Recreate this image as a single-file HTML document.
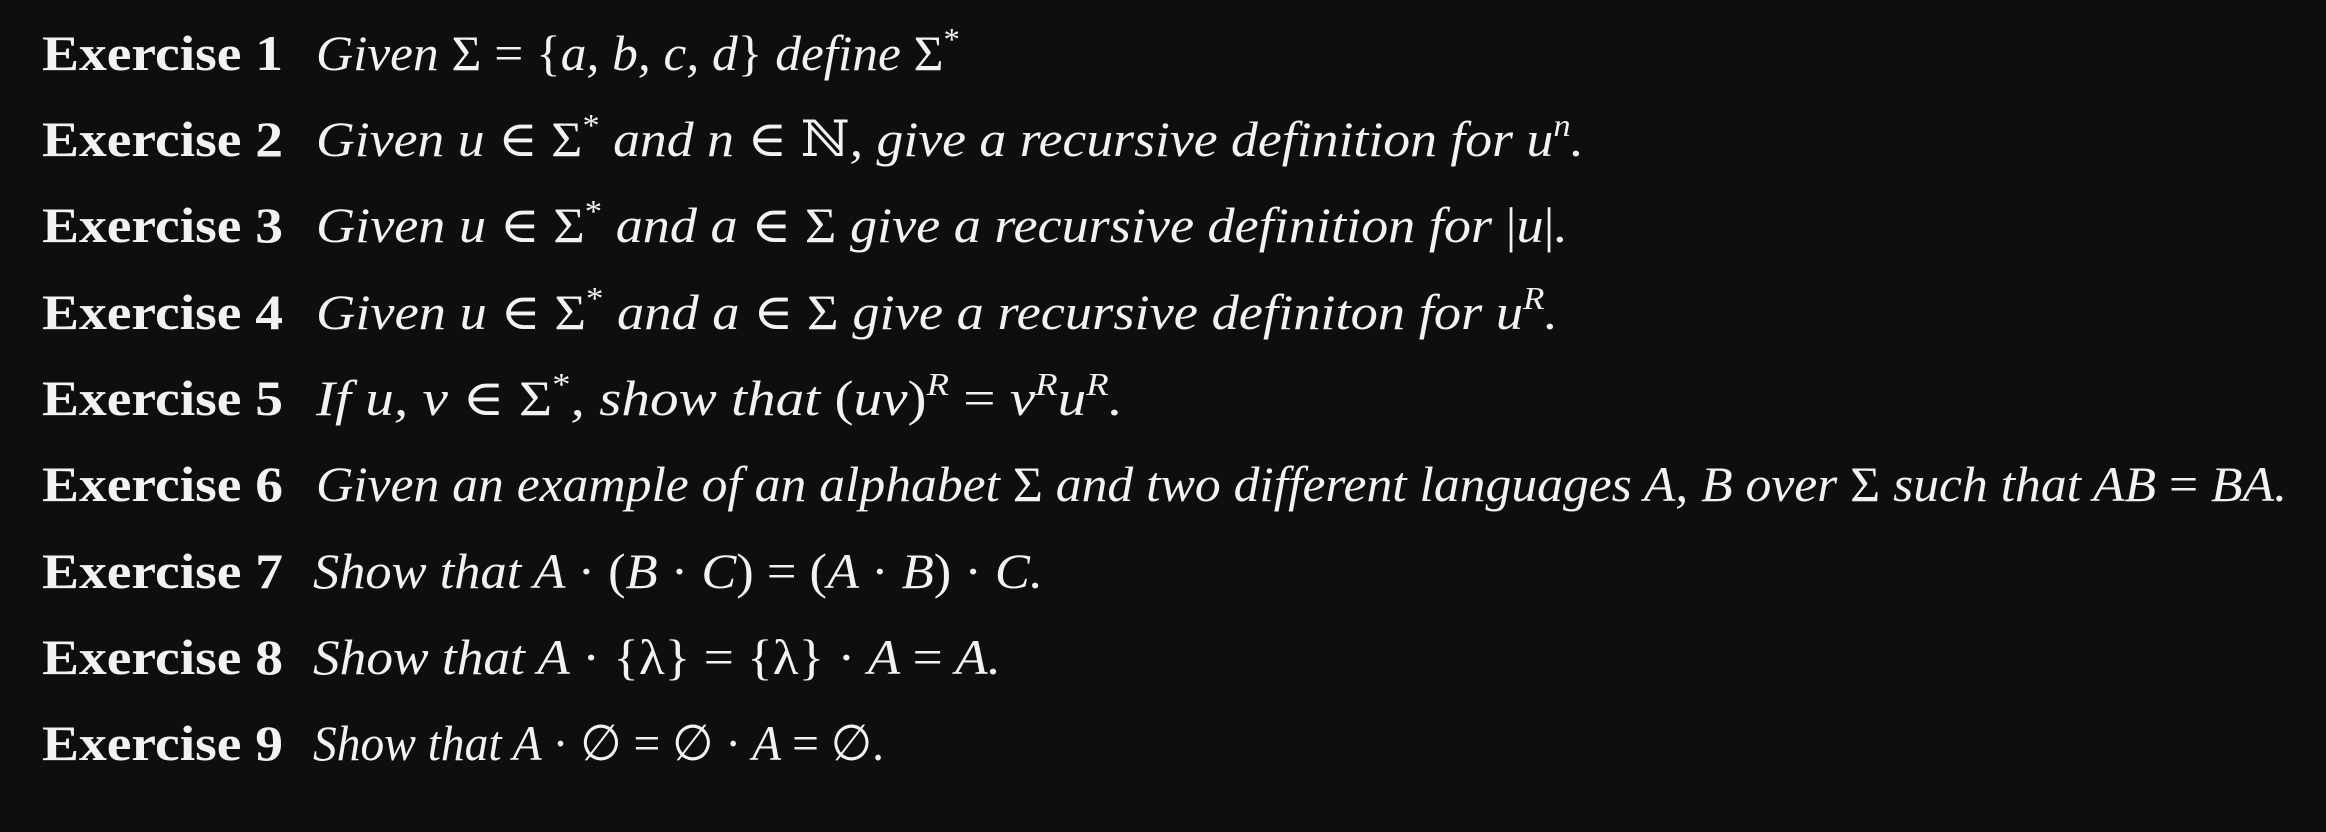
<!DOCTYPE html>
<html><head><meta charset="utf-8"><style>
html,body{margin:0;padding:0;background:#0e0e0e;width:2326px;height:832px;overflow:hidden}
svg{display:block}
text{fill:#f2f2f2;font-family:"Liberation Serif","DejaVu Serif",serif;font-size:50px}
.b{font-weight:bold}
.i{font-style:italic}
</style></head><body>
<svg width="2326" height="832" xmlns="http://www.w3.org/2000/svg">
<g class="b">
<text class="b" x="42" y="70" textLength="241" lengthAdjust="spacingAndGlyphs">Exercise 1</text>
<text class="b" x="42" y="156" textLength="241" lengthAdjust="spacingAndGlyphs">Exercise 2</text>
<text class="b" x="42" y="242" textLength="241" lengthAdjust="spacingAndGlyphs">Exercise 3</text>
<text class="b" x="42" y="329" textLength="241" lengthAdjust="spacingAndGlyphs">Exercise 4</text>
<text class="b" x="42" y="415" textLength="241" lengthAdjust="spacingAndGlyphs">Exercise 5</text>
<text class="b" x="42" y="501" textLength="241" lengthAdjust="spacingAndGlyphs">Exercise 6</text>
<text class="b" x="42" y="588" textLength="241" lengthAdjust="spacingAndGlyphs">Exercise 7</text>
<text class="b" x="42" y="674" textLength="241" lengthAdjust="spacingAndGlyphs">Exercise 8</text>
<text class="b" x="42" y="760" textLength="241" lengthAdjust="spacingAndGlyphs">Exercise 9</text>
</g>
<text class="i" x="316" y="70" textLength="644" lengthAdjust="spacingAndGlyphs">Given <tspan font-style="normal">Σ = {</tspan>a, b, c, d<tspan font-style="normal">}</tspan> define <tspan font-style="normal">Σ</tspan><tspan font-style="normal" font-size="32" dy="-20">*</tspan></text>
<text class="i" x="316" y="156" textLength="1268" lengthAdjust="spacingAndGlyphs">Given u <tspan font-style="normal">∈ Σ</tspan><tspan font-style="normal" font-size="32" dy="-20">*</tspan><tspan dy="20"> and n </tspan><tspan font-style="normal">∈ ℕ</tspan>, give a recursive definition for u<tspan font-size="32" dy="-20">n</tspan><tspan dy="20">.</tspan></text>
<text class="i" x="316" y="242" textLength="1252" lengthAdjust="spacingAndGlyphs">Given u <tspan font-style="normal">∈ Σ</tspan><tspan font-style="normal" font-size="32" dy="-20">*</tspan><tspan dy="20"> and a </tspan><tspan font-style="normal">∈ Σ</tspan> give a recursive definition for <tspan font-style="normal">|</tspan>u<tspan font-style="normal">|</tspan>.</text>
<text class="i" x="316" y="329" textLength="1242" lengthAdjust="spacingAndGlyphs">Given u <tspan font-style="normal">∈ Σ</tspan><tspan font-style="normal" font-size="32" dy="-20">*</tspan><tspan dy="20"> and a </tspan><tspan font-style="normal">∈ Σ</tspan> give a recursive definiton for u<tspan font-size="32" dy="-20">R</tspan><tspan dy="20">.</tspan></text>
<text class="i" x="316" y="415" textLength="807" lengthAdjust="spacingAndGlyphs">If u, v <tspan font-style="normal">∈ Σ</tspan><tspan font-style="normal" font-size="32" dy="-20">*</tspan><tspan dy="20">, show that </tspan><tspan font-style="normal">(</tspan>uv<tspan font-style="normal">)</tspan><tspan font-size="32" dy="-20">R</tspan><tspan dy="20" font-style="normal"> = </tspan>v<tspan font-size="32" dy="-20">R</tspan><tspan dy="20">u</tspan><tspan font-size="32" dy="-20">R</tspan><tspan dy="20">.</tspan></text>
<text class="i" x="316" y="501" textLength="1971" lengthAdjust="spacingAndGlyphs">Given an example of an alphabet <tspan font-style="normal">Σ</tspan> and two different languages A, B over <tspan font-style="normal">Σ</tspan> such that AB <tspan font-style="normal">=</tspan> BA.</text>
<text class="i" x="313" y="588" textLength="730" lengthAdjust="spacingAndGlyphs">Show that A <tspan font-style="normal">· (</tspan>B <tspan font-style="normal">·</tspan> C<tspan font-style="normal">) = (</tspan>A <tspan font-style="normal">·</tspan> B<tspan font-style="normal">) ·</tspan> C.</text>
<text class="i" x="313" y="674" textLength="688" lengthAdjust="spacingAndGlyphs">Show that A <tspan font-style="normal">· {λ} = {λ} ·</tspan> A <tspan font-style="normal">=</tspan> A.</text>
<text class="i" x="313" y="760" textLength="571" lengthAdjust="spacingAndGlyphs">Show that A <tspan font-style="normal">· ∅ = ∅ ·</tspan> A <tspan font-style="normal">= ∅.</tspan></text>
</svg>
</body></html>
